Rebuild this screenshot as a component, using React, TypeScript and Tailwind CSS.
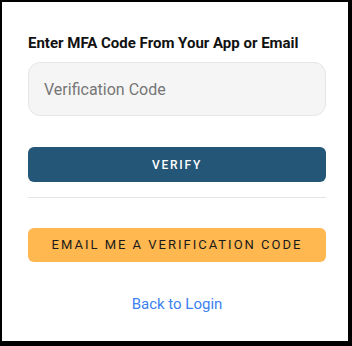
export default function App() {
  return (
    <div className="w-[352px] h-[346px] bg-black pt-[2px] pl-[2px] pr-[4px] pb-[5px] font-['Roboto',sans-serif]">
      <div className="bg-white h-full pl-[26px] pr-[22px] pt-[31px]">
        <h2 className="text-[15px] font-bold text-[#111] leading-[20px]">
          Enter MFA Code From Your App or Email
        </h2>
        <input
          type="text"
          placeholder="Verification Code"
          className="mt-[9px] w-full h-[54px] rounded-[12px] border border-[#e6e6e6] bg-[#f5f5f5] px-[15px] text-[16px] text-[#333] placeholder:text-[#767676] outline-none"
        />
        <button className="mt-[31px] w-full h-[35px] rounded-[6px] bg-[#245677] text-white text-[12px] font-medium tracking-[1.8px]">
          VERIFY
        </button>
        <div className="mt-[15px] h-px bg-[#e5e5e5]" />
        <button className="mt-[30px] w-full h-[34px] rounded-[6px] bg-[#ffb74f] text-[#1a1a1a] text-[13px] tracking-[2px]">
          EMAIL ME A VERIFICATION CODE
        </button>
        <div className="mt-[30px] text-center">
          <a href="#" className="text-[15px] text-[#3b7ff0]">
            Back to Login
          </a>
        </div>
      </div>
    </div>
  );
}
